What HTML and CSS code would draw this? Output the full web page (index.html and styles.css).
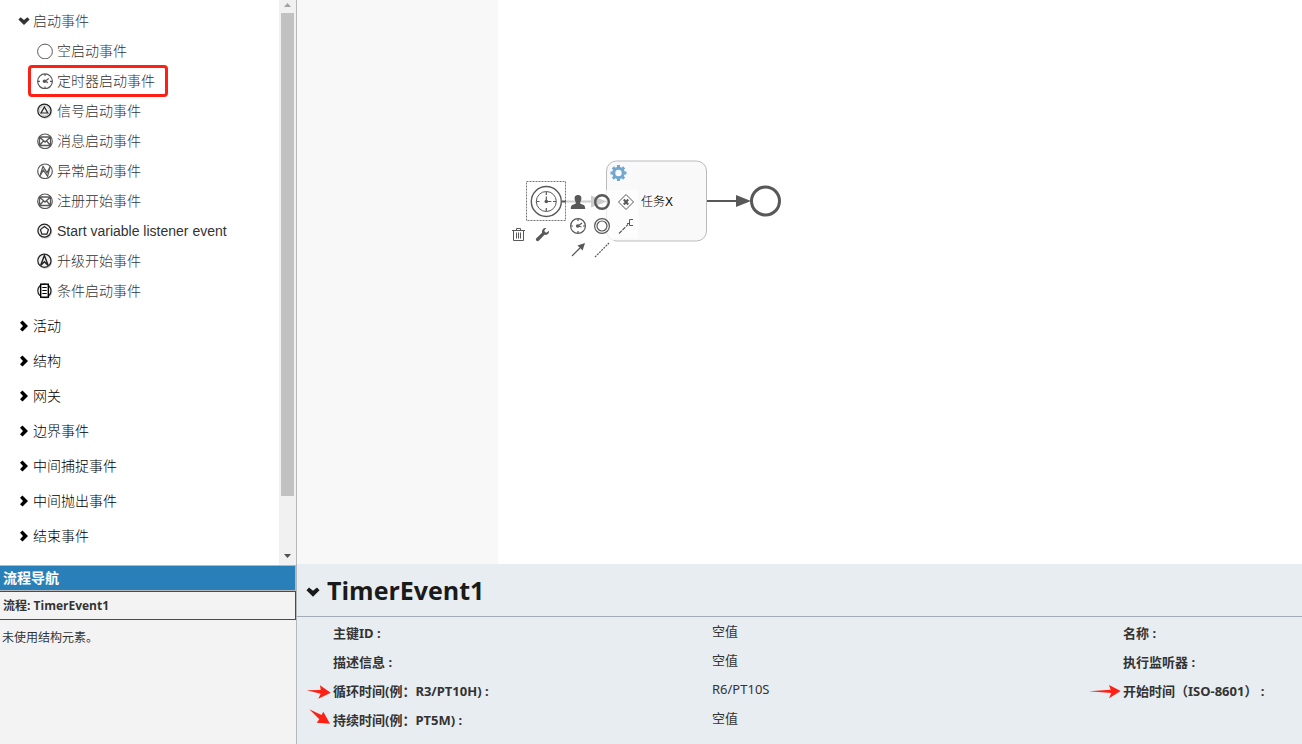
FILE: index.html
```html
<!DOCTYPE html>
<html lang="zh-CN">
<head>
<meta charset="utf-8">
<title>TimerEvent1</title>
<link rel="stylesheet" href="styles.css">
</head>
<body>
<svg class="defs" aria-hidden="true">
  <defs>
    <symbol id="chev-right" viewBox="0 0 12 12"><path d="M2 2.800 4.500.4 10 6 4.500 11.600 2 9.200 5 6Z" fill="currentColor"/></symbol>
    <symbol id="chev-down" viewBox="0 0 12 12"><path d="M.4 4.400 2.600 2.200 6 5 9.400 2.200 11.600 4.400 6 10Z" fill="currentColor"/></symbol>
    <symbol id="i-none" viewBox="0 0 16 16"><circle cx="8" cy="8.500" r="7.400" fill="none" stroke="#585858"/></symbol>
    <symbol id="i-timer" viewBox="0 0 16 16"><circle cx="8" cy="8.300" r="7.400" fill="none" stroke="#585858" stroke-width="1.200"/><path d="M8 1v2M8 13.500v2M1 8.300h2M13 8.300h2M8 8.300l3.800-2.800M8 8.300l3 1.300" stroke="#585858" fill="none" stroke-width="1.200"/><circle cx="7.500" cy="8.300" r="1.800" fill="#585858"/></symbol>
    <symbol id="i-signal" viewBox="0 0 16 16"><circle cx="8.300" cy="8.800" r="7" fill="#ccc"/><circle cx="7.400" cy="7.700" r="6.600" fill="#f2f2f2" stroke="#222" stroke-width="1.200"/><circle cx="7.400" cy="7.700" r="5" fill="none" stroke="#aaa" stroke-width=".6"/><path d="M7.400 4 10.800 10H4Z" fill="none" stroke="#222" stroke-width="1.200"/></symbol>
    <symbol id="i-message" viewBox="0 0 16 16"><circle cx="8" cy="8.300" r="7.300" fill="none" stroke="#585858" stroke-width="1.200"/><path d="M2.500 4h11v8.500h-11ZM2.500 4 8 9l5.500-5M2.500 12.500 6.400 8M13.500 12.500 9.600 8" fill="none" stroke="#585858" stroke-width="1.300"/></symbol>
    <symbol id="i-error" viewBox="0 0 16 16"><circle cx="8" cy="8.300" r="7.300" fill="none" stroke="#585858" stroke-width="1.200"/><path d="M2.800 13.300 6 3.500l4 6.200 3.400-6.800L10.600 13.300 6.400 7.100Z" fill="none" stroke="#585858" stroke-width="1.200"/></symbol>
    <symbol id="i-variable" viewBox="0 0 16 16"><circle cx="8.300" cy="8.800" r="7" fill="#ccc"/><circle cx="7.400" cy="7.700" r="6.500" fill="#f2f2f2" stroke="#222" stroke-width="1.300"/><path d="M7.400 3.600 11.400 6.600 9.900 11.200H4.900L3.400 6.600Z" fill="#fff" stroke="#222" stroke-width="1.200"/></symbol>
    <symbol id="i-escalation" viewBox="0 0 16 16"><circle cx="8.300" cy="8.800" r="7" fill="#ccc"/><circle cx="7.400" cy="7.700" r="6.600" fill="#eee" stroke="#222" stroke-width="1.200"/><path d="M7.400 2.400 11.200 12.600 7.400 8.800 3.600 12.600Z" fill="none" stroke="#222" stroke-width="1.400"/></symbol>
    <symbol id="i-condition" viewBox="0 0 16 16"><circle cx="8.300" cy="8.800" r="7" fill="#ccc"/><circle cx="7.400" cy="7.700" r="6.600" fill="#eee" stroke="#222" stroke-width="1.200"/><rect x="3.700" y="1.200" width="7.600" height="13" fill="#fff" stroke="#000" stroke-width="1.400"/><path d="M5.300 4.500h4.400M5.300 7.500h4.400M5.300 10.500h4.400" stroke="#000" stroke-width="1.200"/></symbol>
  </defs>
</svg>

<aside class="sidebar">
  <div class="palette">
    <ul class="groups">
      <li class="group open">
        <button class="group-head" aria-expanded="true"><svg class="chev"><use href="#chev-down"/></svg>启动事件</button>
        <ul class="items">
          <li><button class="item"><svg><use href="#i-none"/></svg>空启动事件</button></li>
          <li><button class="item marked"><svg><use href="#i-timer"/></svg>定时器启动事件</button></li>
          <li><button class="item"><svg><use href="#i-signal"/></svg>信号启动事件</button></li>
          <li><button class="item"><svg><use href="#i-message"/></svg>消息启动事件</button></li>
          <li><button class="item"><svg><use href="#i-error"/></svg>异常启动事件</button></li>
          <li><button class="item"><svg><use href="#i-message"/></svg>注册开始事件</button></li>
          <li><button class="item"><svg><use href="#i-variable"/></svg>Start variable listener event</button></li>
          <li><button class="item"><svg><use href="#i-escalation"/></svg>升级开始事件</button></li>
          <li><button class="item"><svg><use href="#i-condition"/></svg>条件启动事件</button></li>
        </ul>
      </li>
      <li class="group"><button class="group-head"><svg class="chev"><use href="#chev-right"/></svg>活动</button></li>
      <li class="group"><button class="group-head"><svg class="chev"><use href="#chev-right"/></svg>结构</button></li>
      <li class="group"><button class="group-head"><svg class="chev"><use href="#chev-right"/></svg>网关</button></li>
      <li class="group"><button class="group-head"><svg class="chev"><use href="#chev-right"/></svg>边界事件</button></li>
      <li class="group"><button class="group-head"><svg class="chev"><use href="#chev-right"/></svg>中间捕捉事件</button></li>
      <li class="group"><button class="group-head"><svg class="chev"><use href="#chev-right"/></svg>中间抛出事件</button></li>
      <li class="group"><button class="group-head"><svg class="chev"><use href="#chev-right"/></svg>结束事件</button></li>
    </ul>
    <div class="scrollbar" aria-hidden="true">
      <svg class="scroll-up" viewBox="0 0 17 13"><path d="M5 7 8.500 3 12 7Z" fill="#a3a3a3"/></svg>
      <div class="thumb"></div>
      <svg class="scroll-down" viewBox="0 0 17 17"><path d="M5 6h7L8.500 10Z" fill="#505050"/></svg>
    </div>
  </div>
  <nav class="navigator">
    <h2 class="nav-title">流程导航</h2>
    <div class="nav-process">流程: TimerEvent1</div>
    <p class="nav-empty">未使用结构元素。</p>
  </nav>
</aside>

<main class="workspace">
  <section class="canvas">
    <div class="margin-area"></div>
    <div class="paper"></div>
    <svg class="diagram" viewBox="520 150 300 120">
      <rect x="606.500" y="161" width="100" height="80" rx="10" fill="#f9f9f9" stroke="#bbb"/>
      <g fill="none" stroke="#585858">
        <rect x="526.500" y="181.500" width="39" height="39" stroke-dasharray="2 1" stroke="#777"/>
        <circle cx="546.300" cy="201.500" r="15" stroke-width="1.400"/>
        <circle cx="546.300" cy="201.500" r="10"/>
        <path d="M546.300 192v3M546.300 208v3M536.500 201.500h3M553 201.500h3M546.300 201.500v-5M546.300 201.500h5" stroke-width="1.200"/>
        <path d="M562 201.500h30M707 201h30" stroke-width="2"/>
        <circle cx="765.500" cy="201" r="14" stroke-width="3"/>
      </g>
      <path d="M591 195.500 607 201.500 591 207.500ZM736 195 751 201 736 207Z" fill="#585858"/>
      <circle cx="546.300" cy="201.500" r="1.800" fill="#585858"/>
      <g transform="translate(618.500 173)">
        <circle r="4.700" fill="none" stroke="#72a7d0" stroke-width="3"/>
        <path d="M-1.500-8h3v3h-3ZM-1.500 5h3v3h-3ZM-8-1.500h3v3h-3ZM5-1.500h3v3h-3Z" fill="#72a7d0"/>
        <path transform="rotate(45)" d="M-1.500-8h3v3h-3ZM-1.500 5h3v3h-3ZM-8-1.500h3v3h-3ZM5-1.500h3v3h-3Z" fill="#72a7d0"/>
      </g>
      <text class="task-name" x="641" y="206">任务X</text>
    </svg>
    <div class="pad pad-create">
      <button aria-label="User task"><svg viewBox="0 0 24 24"><path d="M12 5c2.500 0 3.600 1.600 3.400 3.800-.2 1.900-1 2.800-1.200 3.600 0 1 .3 1.500 1.600 1.900 2 .6 3.400 1 3.400 4.700H4.800c0-3.700 1.400-4.100 3.400-4.700 1.300-.4 1.600-.9 1.600-1.900C9.600 11.600 8.800 10.700 8.600 8.800 8.400 6.600 9.500 5 12 5Z" fill="#585858"/></svg></button>
      <button aria-label="End event"><svg viewBox="0 0 24 24"><circle cx="12" cy="12" r="6.800" fill="none" stroke="#585858" stroke-width="2.400"/></svg></button>
      <button aria-label="Exclusive gateway"><svg viewBox="0 0 24 24"><path d="M12 4.500 19.500 12 12 19.500 4.500 12Z" fill="none" stroke="#585858"/><path d="M9.800 9.500l4.400 5M14.200 9.500l-4.400 5" stroke="#585858" stroke-width="2"/></svg></button>
      <button aria-label="Timer catch event"><svg viewBox="0 0 24 24"><circle cx="12" cy="12" r="7.400" fill="none" stroke="#585858" stroke-width="1.200"/><path d="M12 5v2M12 17v2M5 12h2M17 12h2M12 12l4-3M12 12l3.500 1" stroke="#585858" stroke-width="1.200"/><circle cx="11.700" cy="12" r="1.800" fill="#585858"/></svg></button>
      <button aria-label="Throw event"><svg viewBox="0 0 24 24"><circle cx="12" cy="12" r="7.400" fill="none" stroke="#585858" stroke-width="1.200"/><circle cx="12" cy="12" r="5" fill="none" stroke="#585858" stroke-width="1.200"/></svg></button>
      <button aria-label="Text annotation"><svg viewBox="0 0 24 24"><path d="M5 19.500 14 10.500" stroke="#585858" stroke-width="1.200" stroke-dasharray="4 1"/><path d="M19 5.500h-3.500v6H19M15 9.500h-2" fill="none" stroke="#585858"/></svg></button>
      <button aria-label="Sequence flow"><svg viewBox="0 0 24 24"><path d="M6 18 14 10" stroke="#585858" stroke-width="1.200"/><path d="M19 5 16.600 12.500 11.500 7.500Z" fill="#585858"/></svg></button>
      <button aria-label="Association"><svg viewBox="0 0 24 24"><path d="M5 19 19 5" stroke="#585858" stroke-width="1.200" stroke-dasharray="2 1"/></svg></button>
    </div>
    <div class="pad pad-edit">
      <button aria-label="Delete"><svg viewBox="0 0 24 24"><path d="M6 8.500h13M10.500 8V6.500h4V8M7.500 9v9.500h10V9M10.500 10.500v6M12.500 10.500v6M14.500 10.500v6" fill="none" stroke="#585858"/></svg></button>
      <button aria-label="Change type"><svg viewBox="0 0 24 24"><path d="M19 8.800c.4 2.800-1.800 4.600-4.500 4L9 18.500c-.8.8-2 .9-2.700.1s-.5-1.700.3-2.500L12.100 10.800C11.500 7.800 13.500 5.600 16.300 6L14.400 8.300l.5 1.900 2 .3Z" fill="#585858"/></svg></button>
    </div>
  </section>

  <section class="properties">
    <button class="prop-head" aria-expanded="true"><svg class="prop-chev"><use href="#chev-down"/></svg>TimerEvent1</button>
    <dl class="prop-grid">
      <dt>主键ID :</dt><dd>空值</dd><dt>名称 :</dt>
      <dt>描述信息 :</dt><dd>空值</dd><dt>执行监听器 :</dt>
      <dt><svg class="pointer" viewBox="0 0 26 20"><path d="M.7 8.300 14.700 8 14 3.300 24.700 10.700 12.300 16.700 14.700 11.700Z"/></svg>循环时间(例：R3/PT10H) :</dt><dd>R6/PT10S</dd><dt><svg class="pointer" viewBox="0 0 26 20"><path d="M-7 9.300 14.700 7.700 13 3 24.700 9 13 16.300 15.300 11Z"/></svg>开始时间（ISO-8601） :</dt>
      <dt><svg class="pointer" viewBox="0 0 26 20"><path d="M3.300-1.700 15.500 4 17.300.7 24 12.700 10.700 11.700 13.300 8.300Z"/></svg>持续时间(例：PT5M) :</dt><dd>空值</dd>
    </dl>
  </section>
</main>
</body>
</html>
```
FILE: styles.css
```css
* { box-sizing: border-box; }
body {
  margin: 0;
  height: 100vh;
  display: grid;
  grid-template-columns: 297px 1fr;
  overflow: hidden;
  color: #333;
  background: #fff;
  font-family: "Open Sans", "Noto Sans CJK SC", sans-serif;
}
button {
  margin: 0;
  padding: 0;
  border: 0;
  background: none;
  color: inherit;
  font: inherit;
  text-align: left;
  cursor: pointer;
}
ul, dl { list-style: none; margin: 0; padding: 0; }
.defs { position: absolute; width: 0; height: 0; }

.sidebar {
  display: flex;
  flex-direction: column;
  min-height: 0;
  border-right: 1px solid #b5b7ba;
  background: #f3f3f3;
}
.palette {
  flex: 1;
  min-height: 0;
  display: flex;
  background: #fff;
  font: 300 14px/20px "Liberation Sans", "Noto Sans CJK SC", sans-serif;
}
.groups { flex: 1; padding-top: 6px; overflow: hidden; }
.group { margin-bottom: 5px; color: #000; }
.open { color: #333; }
.group-head {
  display: flex;
  align-items: center;
  gap: 3px;
  height: 30px;
  padding-left: 18px;
}
.chev { width: 12px; height: 12px; }
.items li { display: flex; align-items: center; height: 30px; padding-left: 31px; }
.item {
  display: flex;
  align-items: center;
  gap: 4px;
  height: 26px;
  padding: 0 10px 0 6px;
}
.item svg { width: 16px; height: 16px; overflow: visible; }
.item symbol { overflow: visible; }
.marked { outline: 3px solid #fc2015; border-radius: 1px; }

.scrollbar { display: flex; flex-direction: column; width: 17px; background: #f1f1f1; }
.scroll-up { height: 13px; }
.thumb { flex: 7; margin: 0 2px; background: #c1c1c1; }
.scroll-down { height: 17px; margin-top: 52px; }

.navigator { flex: 0 0 24%; border-top: 1px solid #b5b7ba; font-size: 12px; }
.nav-title {
  margin: 0;
  padding: 2px 3px;
  border-right: 1px solid #b5b7ba;
  border-bottom: 1px solid #b5b7ba;
  background: #2980b9;
  color: #fff;
  font-size: 14px;
  line-height: 20px;
}
.nav-process {
  padding: 4px 3px 3px;
  border: 1px solid #008000;
  border-left: 0;
  font-weight: 700;
  line-height: 20px;
}
.nav-empty { margin: 8px 2px; line-height: 20px; }

.workspace { display: flex; flex-direction: column; min-width: 0; min-height: 0; }
.canvas {
  position: relative;
  flex: 1;
  min-height: 0;
  display: grid;
  grid-template-columns: 1fr 4fr;
  overflow: hidden;
}
.margin-area { background: #f8f8f8; }
.diagram { position: absolute; left: 223px; top: 150px; width: 300px; height: 120px; }
.task-name { font: 300 12px "Liberation Sans", "Noto Sans CJK SC", sans-serif; fill: #000; }
.pad { position: absolute; display: grid; }
.pad button { width: 24px; height: 24px; background: rgba(255, 255, 255, 0.7); }
.pad svg { display: block; width: 24px; height: 24px; }
.pad-create { left: 269px; top: 190px; grid-template-columns: repeat(3, 24px); }
.pad-edit { left: 209px; top: 222px; grid-template-columns: repeat(2, 24px); }

.properties { background: #e8edf1; }
.prop-head {
  display: flex;
  align-items: center;
  gap: 7px;
  width: 100%;
  height: 53px;
  padding-left: 9px;
  border-bottom: 1px solid #a4acb9;
  color: #1a1a1a;
  font-size: 25px;
  font-weight: 700;
}
.prop-chev { width: 14px; height: 14px; margin-top: 4px; }
.prop-grid {
  display: grid;
  grid-template-columns: 379fr 411fr 179fr;
  padding: 2px 0 9px 36px;
  font-family: "Noto Sans", "Noto Sans CJK SC", sans-serif;
  font-size: 13px;
}
.prop-grid dt { position: relative; font-weight: 700; line-height: 28px; padding-bottom: 1px; white-space: nowrap; }
.prop-grid dd { margin: 0; line-height: 25px; }
.pointer {
  position: absolute;
  left: -27px;
  top: 5px;
  width: 26px;
  height: 20px;
  overflow: visible;
  fill: #fc2015;
}
```
